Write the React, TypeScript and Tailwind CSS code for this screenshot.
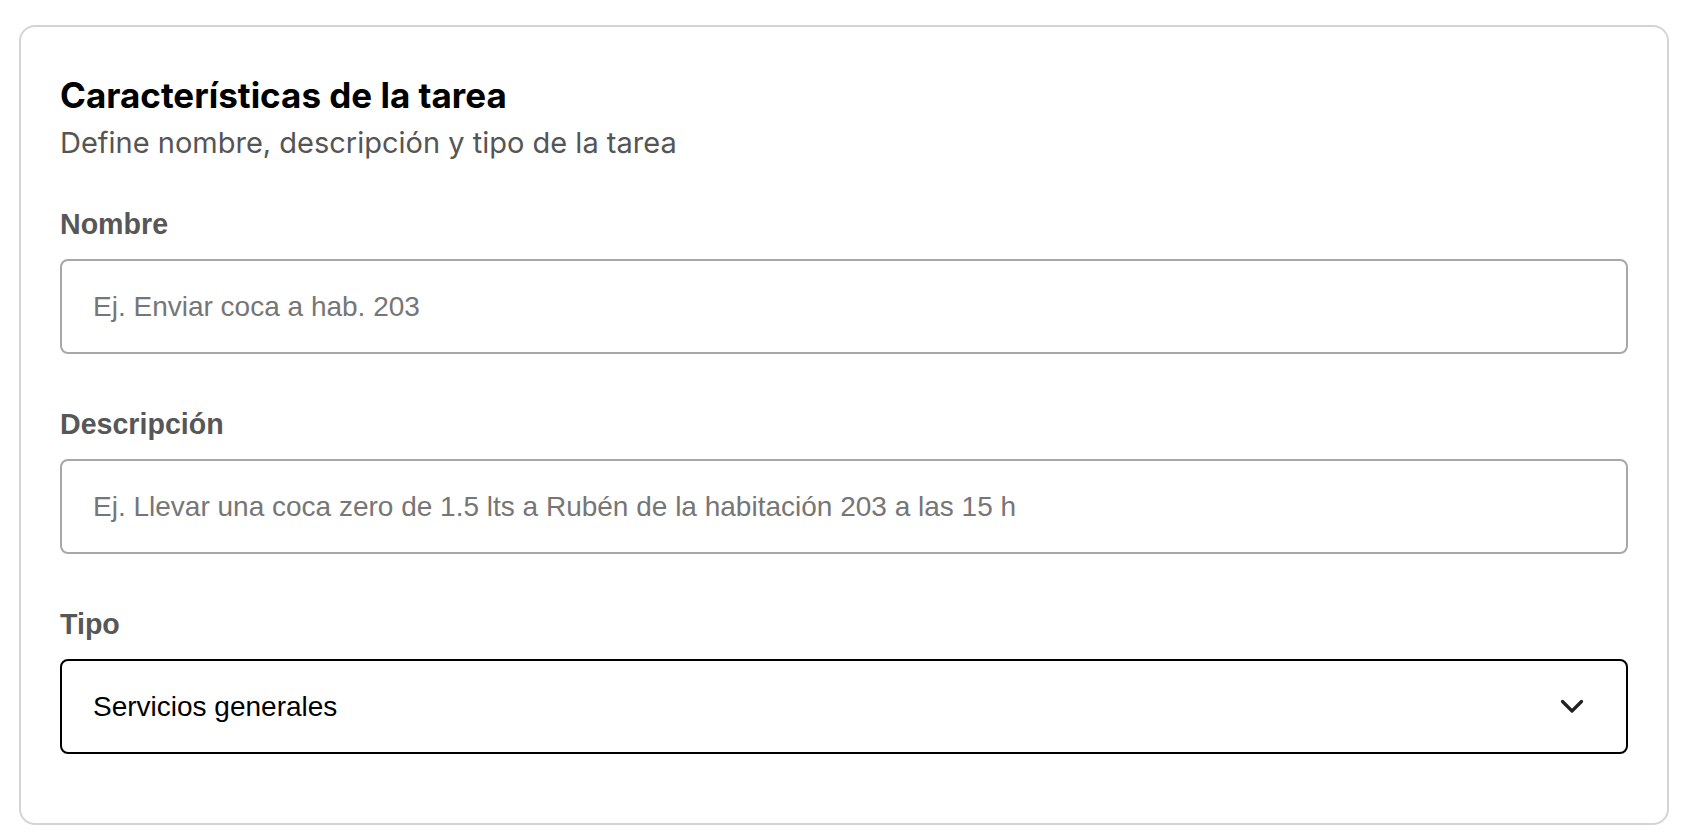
export default function App() {
  return (
    <div className="min-h-screen bg-white pl-[19px] pr-[15px] pt-[25px]">
      <div className="rounded-[16px] border-2 border-[#d4d4d4] bg-white px-[39px] pt-[48px] pb-[69px]">
        <h2 className="font-['Inter',sans-serif] text-[35px] leading-[40px] font-bold text-black">
          Características de la tarea
        </h2>
        <p className="mt-[10px] font-['Inter',sans-serif] text-[29px] leading-[36px] text-[#555555]">
          Define nombre, descripción y tipo de la tarea
        </p>

        <div className="mt-[47px] flex flex-col gap-[54px] font-['Liberation_Sans',Arial,sans-serif]">
          <label className="flex flex-col gap-[19px]">
            <span className="text-[28.6px] leading-[32px] font-bold text-[#575757]">Nombre</span>
            <input
              type="text"
              placeholder="Ej. Enviar coca a hab. 203"
              className="h-[95px] w-full rounded-[8px] border-2 border-[#a8a8a8] bg-white pl-[31px] text-[28px] text-black outline-none placeholder:text-[#767676]"
            />
          </label>

          <label className="flex flex-col gap-[19px]">
            <span className="text-[28.6px] leading-[32px] font-bold text-[#575757]">Descripción</span>
            <input
              type="text"
              placeholder="Ej. Llevar una coca zero de 1.5 lts a Rubén de la habitación 203 a las 15 h"
              className="h-[95px] w-full rounded-[8px] border-2 border-[#a8a8a8] bg-white pl-[31px] text-[28px] text-black outline-none placeholder:text-[#767676]"
            />
          </label>

          <div className="flex flex-col gap-[19px]">
            <span className="text-[28.6px] leading-[32px] font-bold text-[#575757]">Tipo</span>
            <div className="flex h-[95px] w-full items-center justify-between rounded-[8px] border-2 border-black bg-white pl-[31px] pr-[42px]">
              <span className="text-[28px] text-black">Servicios generales</span>
              <svg width="24" height="15" viewBox="0 0 24 15" fill="none">
                <path d="M2.5 2.5 L12 12 L21.5 2.5" stroke="#222222" strokeWidth="3.2" strokeLinecap="round" strokeLinejoin="round" />
              </svg>
            </div>
          </div>
        </div>
      </div>
    </div>
  );
}
